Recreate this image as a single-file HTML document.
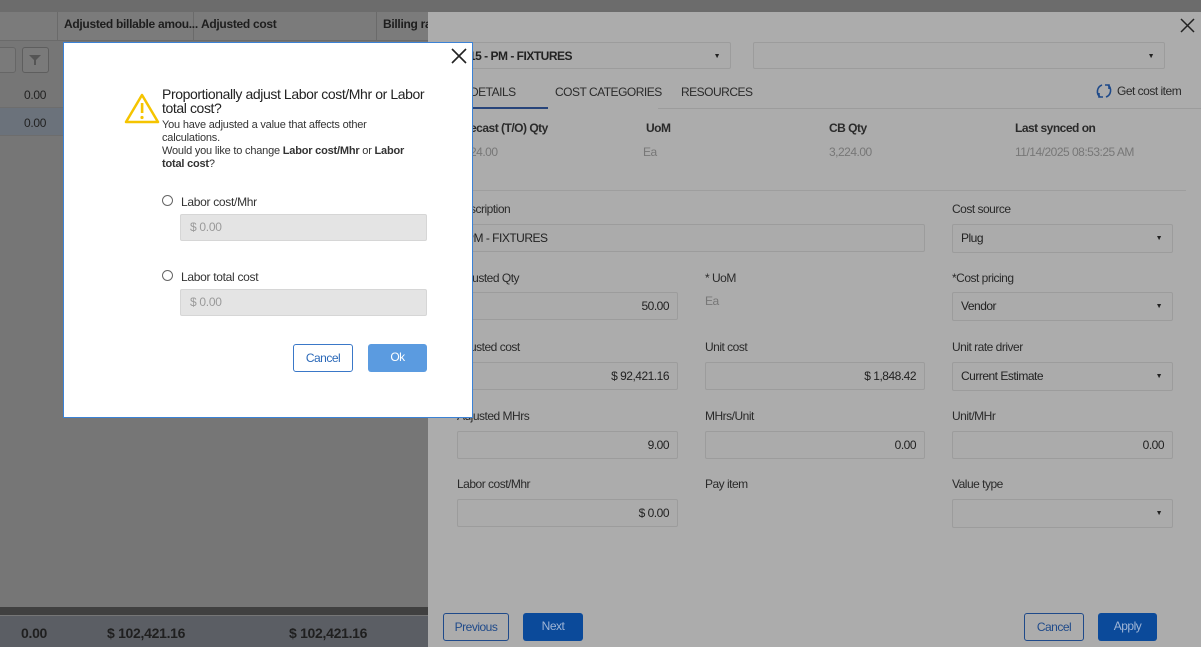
<!DOCTYPE html>
<html><head><meta charset="utf-8"><style>
*{box-sizing:border-box;margin:0;padding:0}
body{width:1201px;height:647px;overflow:hidden;position:relative;font-family:"Liberation Sans",sans-serif;font-size:12px;background:#767676;color:#222;letter-spacing:-0.3px}
.abs{position:absolute}
.top{left:0;top:0;width:1201px;height:12px;background:#6c6c6c}
.left{left:0;top:12px;width:428px;height:635px;background:#767676}
.hdr{top:12px;left:0;width:428px;height:29px;background:#7b7b7b;border-bottom:1px solid #6a6a6a}
.hc{position:absolute;top:5px;font-weight:bold;font-size:12px;color:#1e1e1e}
.vs{position:absolute;top:12px;width:1px;height:29px;background:#6a6a6a}
.row{left:0;width:428px;height:26px;border-bottom:1px solid #6d6d6d}
.foot{left:0;top:616px;width:428px;height:31px;background:#5b5e64}
.fv{position:absolute;top:625px;font-size:14px;font-weight:bold;color:#1f1f1f}
.right{left:428px;top:12px;width:773px;height:635px;background:#acacac}
.lbl{position:absolute;font-size:12px;color:#2a2a2a;letter-spacing:-0.5px}
.b{font-weight:bold}
.inp{position:absolute;height:28px;border:1px solid #9c9c9c;border-radius:2px;background:#ababab;font-size:12px;color:#222;padding:0 8px;line-height:26px;letter-spacing:-0.5px}
.r{text-align:right}
.arr{position:absolute;right:10px;top:1px;font-size:7px;color:#222}
.btn{position:absolute;height:28px;border-radius:3px;font-size:12px;line-height:26px;text-align:center;letter-spacing:-0.5px}
.dlg{left:63px;top:42px;width:410px;height:376px;background:#fff;border:1px solid #3b82d6}
</style></head><body>
<div class="abs top"></div>
<div class="abs left"></div>
<div class="abs hdr"></div>
<div class="vs" style="left:57px"></div><div class="vs" style="left:193px"></div><div class="vs" style="left:376px"></div>
<div class="hc" style="left:64px;top:17px">Adjusted billable amou...</div>
<div class="hc" style="left:201px;top:17px">Adjusted cost</div>
<div class="hc" style="left:383px;top:17px">Billing ra</div>
<div class="abs" style="left:-4px;top:47px;width:20px;height:26px;border:1px solid #666;border-radius:3px;background:#7a7a7a"></div>
<div class="abs" style="left:22px;top:47px;width:27px;height:26px;border:1px solid #5e5e5e;border-radius:3px;background:#7a7a7a"></div>
<svg class="abs" style="left:28px;top:54px" width="14" height="12"><path d="M1 1h12l-5 5v5h-2v-5z" fill="#555"/></svg>
<div class="abs row" style="top:82px;background:#767676"></div>
<div class="abs row" style="top:108px;height:28px;background:#6b727b"></div>
<div class="abs" style="left:24px;top:88px;font-size:12px">0.00</div>
<div class="abs" style="left:24px;top:116px;font-size:12px">0.00</div>
<div class="abs" style="left:0;top:607px;width:428px;height:8px;background:#404040"></div>
<div class="abs foot"></div>
<div class="fv" style="left:21px">0.00</div>
<div class="fv" style="left:107px">$ 102,421.16</div>
<div class="fv" style="left:289px">$ 102,421.16</div>

<div class="abs right"></div>
<svg class="abs" style="left:1180px;top:18px" width="15" height="15"><path d="M1 1L14 14M14 1L1 14" stroke="#222" stroke-width="1.5"/></svg>
<div class="inp" style="left:460px;top:42px;width:271px;height:27px;font-weight:bold">15 - PM - FIXTURES<span class="arr">▼</span></div>
<div class="inp" style="left:753px;top:42px;width:412px;height:27px"><span class="arr">▼</span></div>
<div class="lbl" style="left:470px;top:85px">DETAILS</div>
<div class="abs" style="left:470px;top:107px;width:78px;height:2px;background:#27447a"></div>
<div class="lbl" style="left:555px;top:85px">COST CATEGORIES</div>
<div class="lbl" style="left:681px;top:85px">RESOURCES</div>
<div class="abs" style="left:658px;top:108px;width:543px;height:1px;background:#9c9c9c"></div>
<svg class="abs" style="left:1095px;top:82px" width="18" height="18" fill="none" stroke="#1f4a8a" stroke-width="1.6"><path d="M7 3A7 7 0 0 0 5 15"/><path d="M4 11v4h4" /><path d="M11 15A7 7 0 0 0 13 3"/><path d="M14 7V3h-4"/></svg>
<div class="lbl" style="left:1117px;top:84px">Get cost item</div>
<div class="lbl b" style="left:470px;top:121px">ecast (T/O) Qty</div>
<div class="lbl b" style="left:646px;top:121px">UoM</div>
<div class="lbl b" style="left:829px;top:121px">CB Qty</div>
<div class="lbl b" style="left:1015px;top:121px">Last synced on</div>
<div class="lbl" style="left:470px;top:145px;color:#777">24.00</div>
<div class="lbl" style="left:643px;top:145px;color:#777">Ea</div>
<div class="lbl" style="left:829px;top:145px;color:#777">3,224.00</div>
<div class="lbl" style="left:1015px;top:145px;color:#777">11/14/2025 08:53:25 AM</div>
<div class="abs" style="left:428px;top:190px;width:758px;height:1px;background:#9e9e9e"></div>

<div class="lbl" style="left:470px;top:202px">scription</div>
<div class="inp" style="left:457px;top:224px;width:468px">PM - FIXTURES</div>
<div class="lbl" style="left:952px;top:202px">Cost source</div>
<div class="inp" style="left:952px;top:224px;width:221px;height:29px">Plug<span class="arr">▼</span></div>

<div class="lbl" style="left:470px;top:271px">justed Qty</div>
<div class="inp r" style="left:457px;top:292px;width:221px">50.00</div>
<div class="lbl" style="left:705px;top:271px">* UoM</div>
<div class="lbl" style="left:705px;top:294px;color:#777">Ea</div>
<div class="lbl" style="left:952px;top:271px">*Cost pricing</div>
<div class="inp" style="left:952px;top:292px;width:221px;height:29px">Vendor<span class="arr">▼</span></div>

<div class="lbl" style="left:470px;top:340px">usted cost</div>
<div class="inp r" style="left:457px;top:362px;width:221px">$ 92,421.16</div>
<div class="lbl" style="left:705px;top:340px">Unit cost</div>
<div class="inp r" style="left:705px;top:362px;width:220px">$ 1,848.42</div>
<div class="lbl" style="left:952px;top:340px">Unit rate driver</div>
<div class="inp" style="left:952px;top:362px;width:221px;height:29px">Current Estimate<span class="arr">▼</span></div>

<div class="lbl" style="left:457px;top:409px">Adjusted MHrs</div>
<div class="inp r" style="left:457px;top:431px;width:221px">9.00</div>
<div class="lbl" style="left:705px;top:409px">MHrs/Unit</div>
<div class="inp r" style="left:705px;top:431px;width:220px">0.00</div>
<div class="lbl" style="left:952px;top:409px">Unit/MHr</div>
<div class="inp r" style="left:952px;top:431px;width:221px">0.00</div>

<div class="lbl" style="left:457px;top:477px">Labor cost/Mhr</div>
<div class="inp r" style="left:457px;top:499px;width:221px">$ 0.00</div>
<div class="lbl" style="left:705px;top:477px">Pay item</div>
<div class="lbl" style="left:952px;top:477px">Value type</div>
<div class="inp" style="left:952px;top:499px;width:221px;height:29px"><span class="arr">▼</span></div>

<div class="btn" style="left:443px;top:613px;width:66px;border:1px solid #1f4a8a;color:#1f4a8a">Previous</div>
<div class="btn" style="left:523px;top:613px;width:60px;background:#0b4a9a;color:#9fb5d6">Next</div>
<div class="btn" style="left:1024px;top:613px;width:60px;border:1px solid #1f4a8a;color:#1f4a8a">Cancel</div>
<div class="btn" style="left:1098px;top:613px;width:59px;background:#0b4a9a;color:#9fb5d6">Apply</div>

<div class="abs dlg"></div>
<svg class="abs" style="left:451px;top:48px" width="16" height="16"><path d="M1 1L15 15M15 1L1 15" stroke="#222" stroke-width="1.6"/></svg>
<svg class="abs" style="left:124px;top:92px" width="36" height="32"><path d="M18 3L34 30H2Z" fill="none" stroke="#f5c400" stroke-width="2.5" stroke-linejoin="round"/><rect x="16.8" y="11" width="2.6" height="10" fill="#f5c400"/><circle cx="18" cy="25.5" r="1.6" fill="#f5c400"/></svg>
<div class="abs" style="left:162px;top:87px;font-size:14px;line-height:14px;color:#222;width:290px;letter-spacing:-0.4px">Proportionally adjust Labor cost/Mhr or Labor<br>total cost?</div>
<div class="abs" style="left:162px;top:119px;font-size:11px;line-height:13px;color:#333;width:265px;letter-spacing:-0.2px">You have adjusted a value that affects other<br>calculations.<br>Would you like to change <b>Labor cost/Mhr</b> or <b>Labor<br>total cost</b>?</div>
<div class="abs" style="left:162px;top:195px;width:11px;height:11px;border:1px solid #666;border-radius:50%"></div>
<div class="abs" style="left:181px;top:195px;font-size:12px;color:#333">Labor cost/Mhr</div>
<div class="abs" style="left:180px;top:214px;width:247px;height:27px;background:#e4e4e4;border:1px solid #d6d6d6;border-radius:2px;color:#9a9a9a;font-size:12px;padding-left:9px;line-height:25px">$ 0.00</div>
<div class="abs" style="left:162px;top:270px;width:11px;height:11px;border:1px solid #666;border-radius:50%"></div>
<div class="abs" style="left:181px;top:270px;font-size:12px;color:#333">Labor total cost</div>
<div class="abs" style="left:180px;top:289px;width:247px;height:27px;background:#e4e4e4;border:1px solid #d6d6d6;border-radius:2px;color:#9a9a9a;font-size:12px;padding-left:9px;line-height:25px">$ 0.00</div>
<div class="btn" style="left:293px;top:344px;width:60px;border:1px solid #3a78c8;color:#2a68b8;background:#fff">Cancel</div>
<div class="btn" style="left:368px;top:344px;width:59px;background:#5b9be0;color:#fff">Ok</div>
</body></html>
